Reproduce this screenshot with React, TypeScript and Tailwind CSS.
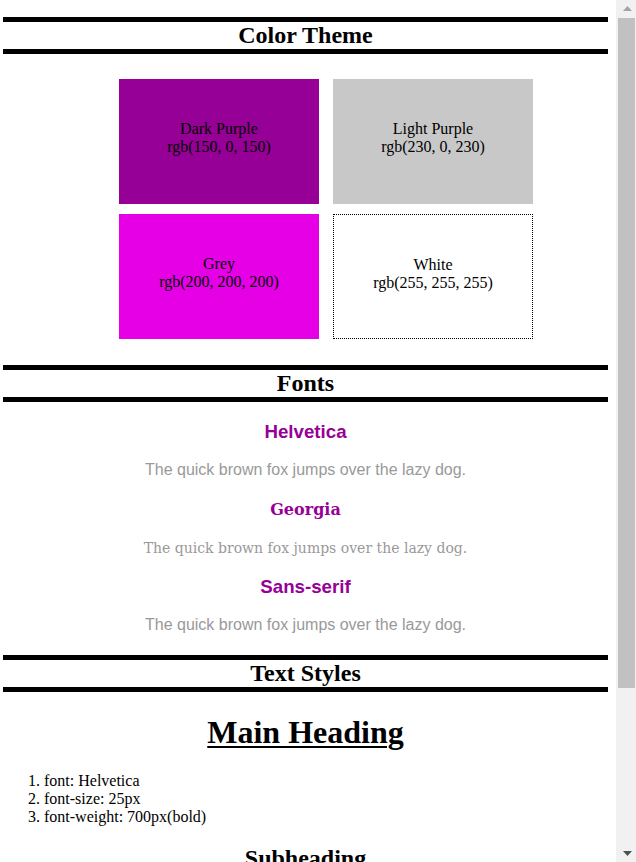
const SERIF = "font-['Liberation_Serif',serif]";
const SANS = "font-['Liberation_Sans',Arial,sans-serif]";

const swatches = [
  { name: "Dark Purple", value: "rgb(150, 0, 150)", cls: "bg-[#960096]" },
  { name: "Light Purple", value: "rgb(230, 0, 230)", cls: "bg-[#c8c8c8]" },
  { name: "Grey", value: "rgb(200, 200, 200)", cls: "bg-[#e600e6]" },
  { name: "White", value: "rgb(255, 255, 255)", cls: "bg-white border border-dotted border-black" },
];

const SectionTitle = ({ children, className = "" }: { children: React.ReactNode; className?: string }) => (
  <h2
    className={`border-y-[5px] border-black text-center text-[24px] font-bold leading-[27px] text-black ${SERIF} ${className}`}
  >
    {children}
  </h2>
);

// classic windows-style scrollbar, drawn in flow beside the page
const Scrollbar = () => (
  <div className="flex h-full w-[20px] shrink-0 flex-col bg-[#f1f1f1]">
    <div className="flex h-[17px] items-center justify-center pl-[2px]">
      <svg width="9" height="5" viewBox="0 0 9 5">
        <path d="M0 5 L4.5 0 L9 5 Z" fill="#a3a3a3" />
      </svg>
    </div>
    <div className="ml-[2px] mr-[1px] mt-[1px] h-[670px] bg-[#c1c1c1]" />
    <div className="flex-1" />
    <div className="flex h-[17px] items-center justify-center pl-[2px]">
      <svg width="9" height="5" viewBox="0 0 9 5">
        <path d="M0 0 L9 0 L4.5 5 Z" fill="#505050" />
      </svg>
    </div>
  </div>
);

export default function App() {
  return (
    <div className={`flex h-[862px] overflow-hidden bg-white text-black ${SERIF}`}>
      <div className="flex-1 overflow-hidden">
        <div className="ml-[3px] w-[605px] pt-[17px]">
          <SectionTitle>Color Theme</SectionTitle>

          <div className="ml-[116px] mt-[25px] grid grid-cols-[200px_200px] gap-x-[14px] gap-y-[10px]">
            {swatches.map((s) => (
              <div key={s.name} className={`h-[125px] pt-[41px] text-center text-[16px] leading-[18px] ${s.cls}`}>
                <div>{s.name}</div>
                <div>{s.value}</div>
              </div>
            ))}
          </div>

          <SectionTitle className="mt-[26px]">Fonts</SectionTitle>

          <div className="flex flex-col items-center text-center">
            <h3 className={`mt-[19px] text-[18.72px] font-bold leading-[22px] text-[#960096] ${SANS}`}>Helvetica</h3>
            <p className={`mt-[18px] text-[16px] leading-[18px] text-[#999999] ${SANS}`}>
              The quick brown fox jumps over the lazy dog.
            </p>
            <h3 className="mt-[20px] font-['DejaVu_Serif',Georgia,serif] text-[16px] font-bold leading-[22px] text-[#960096]">
              Georgia
            </h3>
            <p className="mt-[18px] font-['DejaVu_Serif',Georgia,serif] text-[14px] leading-[18px] text-[#999999]">
              The quick brown fox jumps over the lazy dog.
            </p>
            <h3 className={`mt-[19px] text-[18.72px] font-bold leading-[22px] text-[#960096] ${SANS}`}>Sans-serif</h3>
            <p className={`mt-[18px] text-[16px] leading-[18px] text-[#999999] ${SANS}`}>
              The quick brown fox jumps over the lazy dog.
            </p>
          </div>

          <SectionTitle className="mt-[21px]">Text Styles</SectionTitle>

          <h1 className="mt-[22px] text-center text-[32px] font-bold leading-[37px] underline decoration-[2px] underline-offset-[3px]">
            Main Heading
          </h1>
          <ol className="mt-[21px] list-decimal pl-[41px] text-[16px] leading-[18px]">
            <li>font: Helvetica</li>
            <li>font-size: 25px</li>
            <li>font-weight: 700px(bold)</li>
          </ol>

          <h2 className="mt-[19px] text-center text-[24px] font-bold leading-[27px]">Subheading</h2>
        </div>
      </div>
      <Scrollbar />
    </div>
  );
}
